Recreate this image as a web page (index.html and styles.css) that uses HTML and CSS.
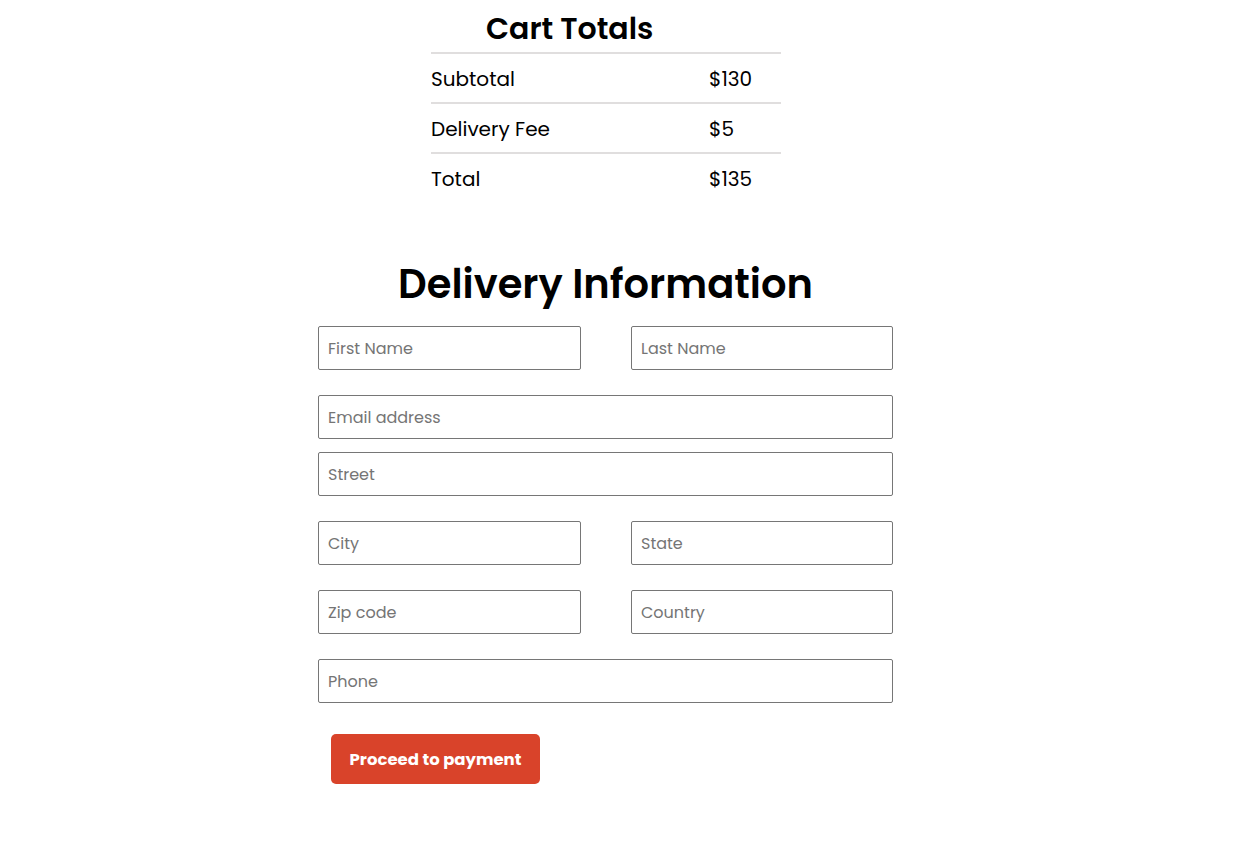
FILE: index.html
```html
<!DOCTYPE html>
<html lang="en">
<head>
<meta charset="utf-8">
<title>Checkout</title>
<link rel="stylesheet" href="styles.css">
</head>
<body>
<div class="page">
  <section class="cart-totals">
    <h2 class="cart-title">Cart Totals</h2>
    <div class="cart-rows">
      <div class="cart-row"><span class="label">Subtotal</span><span class="value">$130</span></div>
      <div class="cart-row"><span class="label">Delivery Fee</span><span class="value">$5</span></div>
      <div class="cart-row"><span class="label">Total</span><span class="value">$135</span></div>
    </div>
  </section>
  <form class="delivery">
    <h1 class="delivery-title">Delivery Information</h1>
    <div class="pair pair-first">
      <input class="field" type="text" placeholder="First Name">
      <input class="field" type="text" placeholder="Last Name">
    </div>
    <input class="field field-full email" type="email" placeholder="Email address">
    <input class="field field-full street" type="text" placeholder="Street">
    <div class="pair">
      <input class="field" type="text" placeholder="City">
      <input class="field" type="text" placeholder="State">
    </div>
    <div class="pair">
      <input class="field" type="text" placeholder="Zip code">
      <input class="field" type="text" placeholder="Country">
    </div>
    <input class="field field-full phone" type="text" placeholder="Phone">
    <button class="pay-btn" type="button">Proceed to payment</button>
  </form>
</div>
</body>
</html>
```

FILE: styles.css
```css
* { box-sizing: border-box; }
body {
  margin: 0;
  background: #ffffff;
  font-family: "Poppins", "DejaVu Sans", "Open Sans", sans-serif;
  color: #000;
}
.page {
  width: 575px;
  margin-left: 318px;
  display: flex;
  flex-direction: column;
}
.cart-totals {
  width: 350px;
  margin-left: 113px;
  padding-top: 8px;
}
.cart-title {
  margin: 0;
  padding-left: 55px;
  font-size: 30px;
  font-weight: 600;
  line-height: 42px;
  height: 44px;
}
.cart-rows { display: flex; flex-direction: column; }
.cart-row {
  display: flex;
  height: 50px;
  align-items: center;
  padding-top: 1px;
  font-size: 20px;
  border-top: 2px solid #e0dede;
}
.label { width: 278px; }
.delivery {
  display: flex;
  flex-direction: column;
  margin-top: 54px;
}
.delivery-title {
  margin: 0 0 14px 0;
  text-align: center;
  font-size: 40px;
  font-weight: 600;
  line-height: 56px;
}
.pair {
  display: flex;
  justify-content: space-between;
  margin-bottom: 25px;
}
.pair .field { width: 263px; }
.pair .field:last-child { width: 262px; }
.field {
  height: 44px;
  border: 1px solid #767676;
  border-radius: 2px;
  padding: 0 9px;
  font-family: inherit;
  font-size: 16px;
  color: #000;
  background: #fff;
  outline: none;
}
.field::placeholder { color: #757575; }
.field-full { width: 575px; }
.email { margin-bottom: 13px; }
.street { margin-bottom: 25px; }
.phone { margin-bottom: 31px; }
.pay-btn {
  align-self: flex-start;
  margin-left: 13px;
  width: 209px;
  height: 50px;
  border: none;
  border-radius: 5px;
  background: #d9432a;
  color: #fff;
  font-family: inherit;
  font-size: 16.5px;
  font-weight: 700;
  cursor: pointer;
}
```
